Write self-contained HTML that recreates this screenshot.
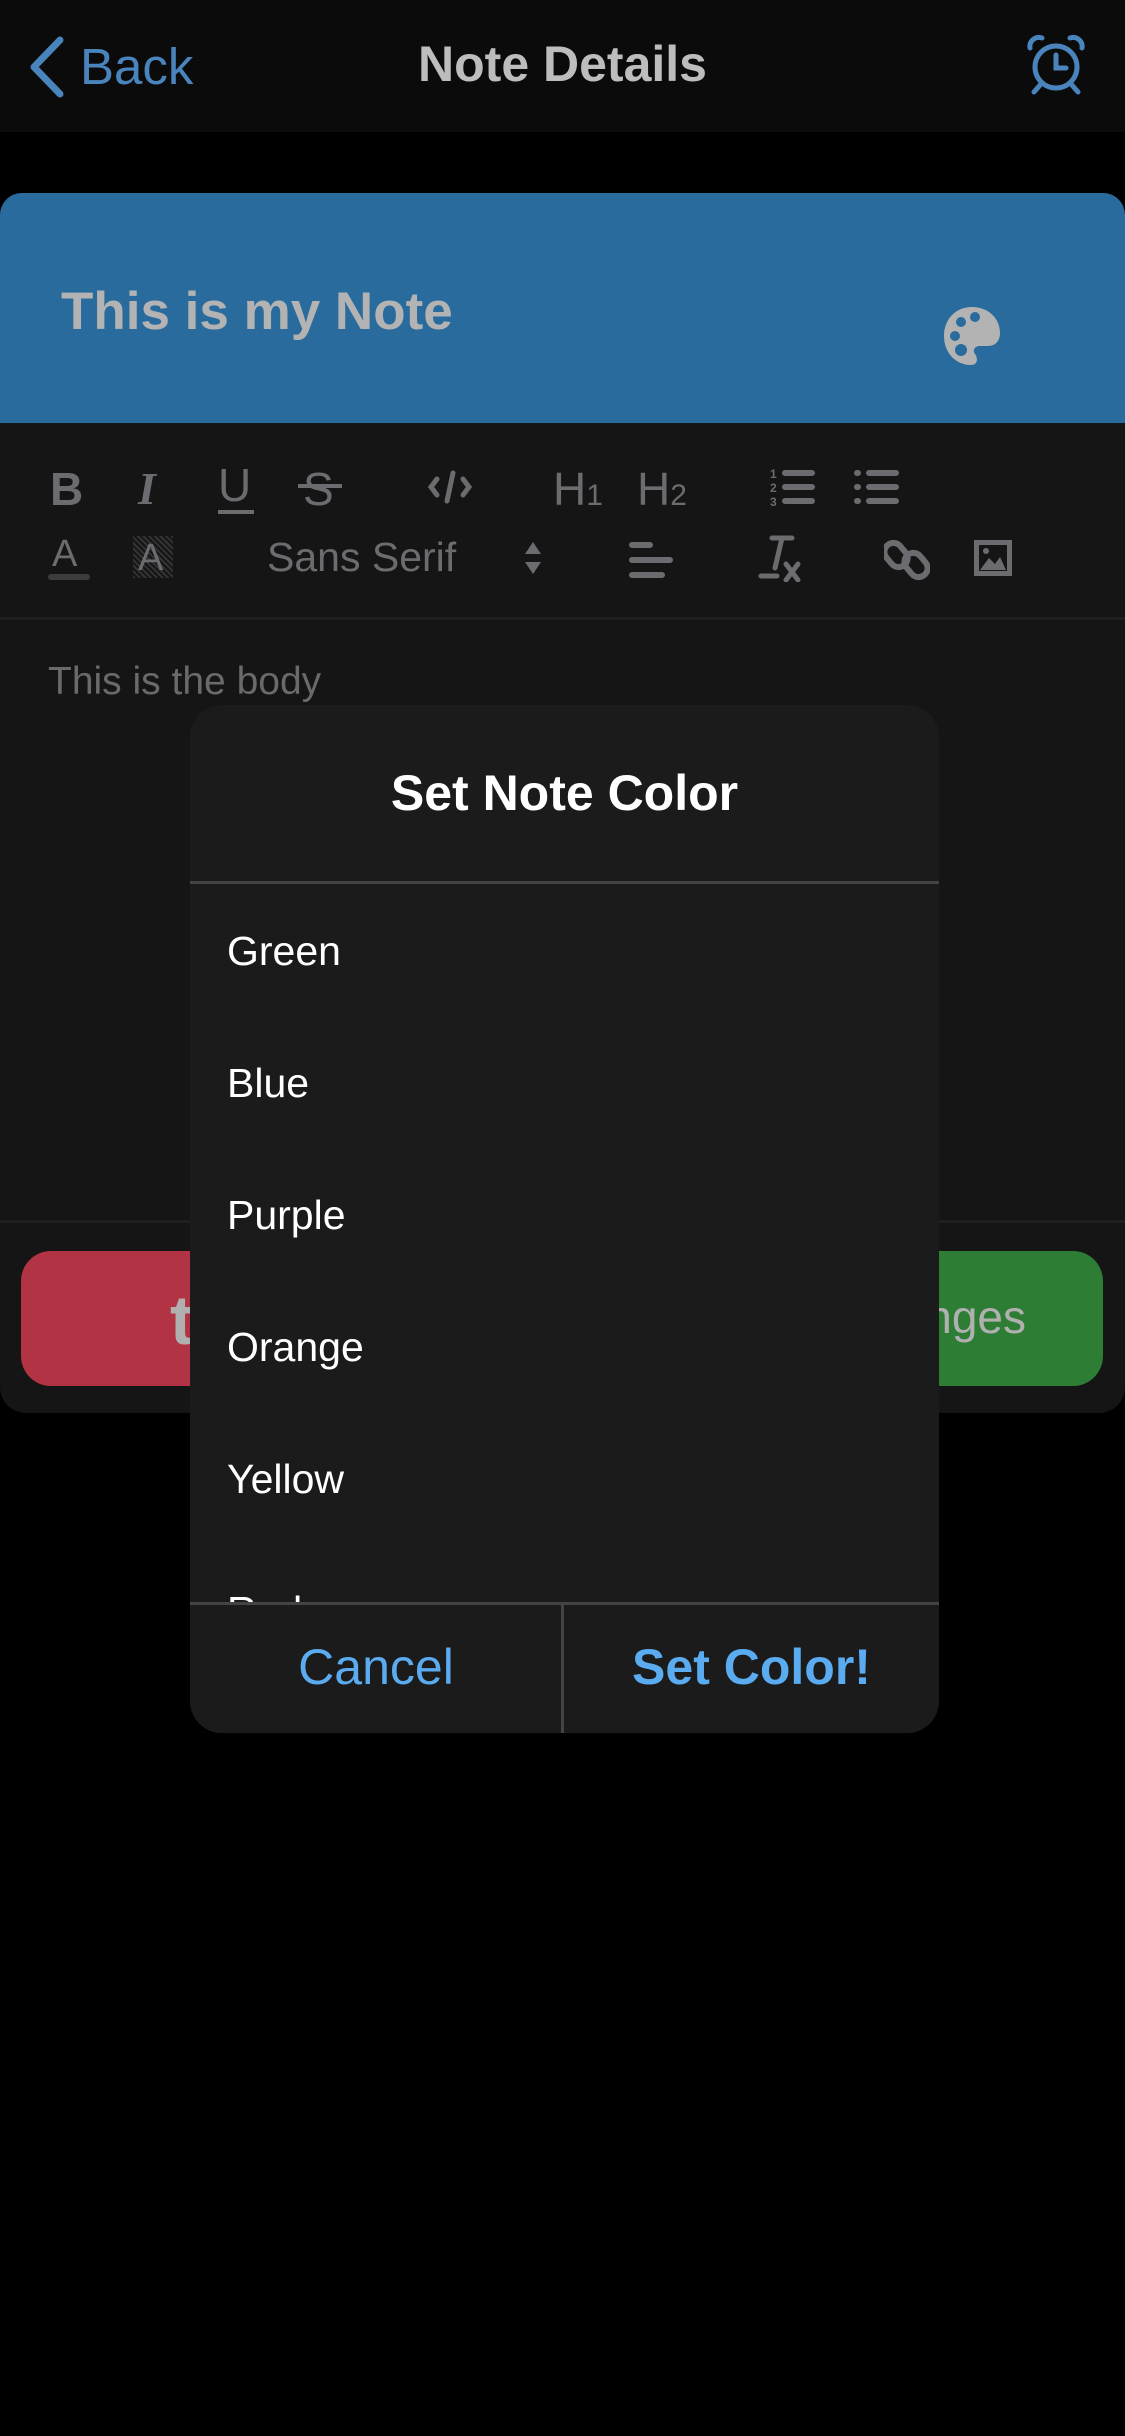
<!DOCTYPE html>
<html><head><meta charset="utf-8"><style>
*{margin:0;padding:0;box-sizing:border-box}
body{width:1125px;height:2436px;background:#000;font-family:"Liberation Sans",sans-serif;position:relative;overflow:hidden}
.a{position:absolute}
.hdr{left:0;top:0;width:1125px;height:132px;background:#0b0b0b}
.card{left:0;top:193px;width:1125px;height:1220px;background:#151515;border-radius:22px 22px 26px 26px;overflow:hidden}
.blue{left:0;top:193px;width:1125px;height:230px;background:#2a6b9e;border-radius:22px 22px 0 0}
.ico{fill:none;stroke:#6c6c70;stroke-width:5;stroke-linecap:round}
.tb{color:#6c6c70;font-weight:bold}
</style></head><body>
<div class="a hdr"></div>
<svg class="a" style="left:26px;top:36px" width="40" height="62" viewBox="0 0 40 62"><path d="M34 4 L8 31 L34 58" fill="none" stroke="#4a84bd" stroke-width="7" stroke-linecap="round" stroke-linejoin="round"/></svg>
<div class="a" style="left:80px;top:37px;font-size:51px;color:#4a84bd">Back</div>
<div class="a" style="left:0;width:1125px;text-align:center;top:35px;font-size:50px;font-weight:bold;color:#bdbdbd">Note Details</div>
<svg class="a" style="left:1024px;top:34px" width="64" height="62" viewBox="0 0 64 62"><g fill="none" stroke="#4a84bd" stroke-width="5" stroke-linecap="round"><circle cx="32" cy="33" r="21"/><path d="M32 21 V34 H42"/><path d="M6 14 A9 9 0 0 1 18 4"/><path d="M58 14 A9 9 0 0 0 46 4"/><path d="M17 50 L10 58 M47 50 L54 58"/></g></svg>

<div class="a card"></div>
<div class="a blue"></div>
<div class="a" style="left:61px;top:281px;font-size:53px;font-weight:bold;color:#b3b3b3">This is my Note</div>
<svg class="a" style="left:942px;top:305px" width="60" height="62" viewBox="0 0 60 62"><path d="M30 2 C13 2 2 15 2 31 C2 48 14 60 29 60 C36 60 36 53 33 49 C30 45 33 41 38 41 L46 41 C54 41 58 35 58 28 C58 13 46 2 30 2 Z" fill="#b3b3b3"/><circle cx="13" cy="31" r="5" fill="#2a6b9e"/><circle cx="19" cy="17" r="5" fill="#2a6b9e"/><circle cx="33" cy="12" r="5" fill="#2a6b9e"/><circle cx="19" cy="45" r="6" fill="#2a6b9e"/></svg>

<!-- toolbar row 1 -->
<div class="a tb" style="left:50px;top:462px;font-size:46px">B</div>
<div class="a tb" style="left:138px;top:462px;font-size:46px;font-style:italic;font-family:'Liberation Serif',serif">I</div>
<div class="a tb" style="left:218px;top:458px;font-size:46px;font-weight:normal">U</div>
<div class="a" style="left:218px;top:510px;width:36px;height:4px;background:#6c6c70"></div>
<div class="a tb" style="left:303px;top:462px;font-size:46px;font-weight:normal">S</div>
<div class="a" style="left:298px;top:484px;width:44px;height:4px;background:#6c6c70"></div>
<svg class="a" style="left:428px;top:470px" width="44" height="34" viewBox="0 0 44 34"><path class="ico" d="M9 9 L3 17 L9 25 M35 9 L41 17 L35 25 M25 3 L19 31"/></svg>
<div class="a tb" style="left:553px;top:462px;font-size:46px;font-weight:normal">H<span style="font-size:30px">1</span></div>
<div class="a tb" style="left:637px;top:462px;font-size:46px;font-weight:normal">H<span style="font-size:30px">2</span></div>
<svg class="a" style="left:770px;top:466px" width="46" height="40" viewBox="0 0 46 40"><text x="0" y="12" font-size="12" fill="#6c6c70" font-family="Liberation Sans" font-weight="bold">1</text><text x="0" y="26" font-size="12" fill="#6c6c70" font-family="Liberation Sans" font-weight="bold">2</text><text x="0" y="40" font-size="12" fill="#6c6c70" font-family="Liberation Sans" font-weight="bold">3</text><path d="M15 7 H42 M15 21 H42 M15 35 H42" stroke="#6c6c70" stroke-width="6" stroke-linecap="round"/></svg>
<svg class="a" style="left:854px;top:466px" width="46" height="40" viewBox="0 0 46 40"><path d="M3 7 H4 M3 21 H4 M3 35 H4 M15 7 H42 M15 21 H42 M15 35 H42" stroke="#6c6c70" stroke-width="6" stroke-linecap="round"/></svg>

<!-- toolbar row 2 -->
<div class="a tb" style="left:52px;top:533px;font-size:38px;font-weight:normal">A</div>
<div class="a" style="left:48px;top:574px;width:42px;height:6px;background:#3c3c3e;border-radius:3px"></div>
<div class="a" style="left:133px;top:536px;width:40px;height:42px;background:repeating-linear-gradient(45deg,#333 0 2px,#151515 2px 4px)"></div>
<div class="a tb" style="left:138px;top:537px;font-size:38px;font-weight:normal">A</div>
<div class="a" style="left:267px;top:534px;font-size:41px;color:#6c6c70">Sans Serif</div>
<svg class="a" style="left:523px;top:540px" width="20" height="36" viewBox="0 0 20 36"><path d="M10 2 L18 14 H2 Z M10 34 L18 22 H2 Z" fill="#6c6c70"/></svg>
<svg class="a" style="left:628px;top:540px" width="46" height="40" viewBox="0 0 46 40"><path d="M4 5 H22 M4 20 H42 M4 35 H34" stroke="#6c6c70" stroke-width="6" stroke-linecap="round"/></svg>
<svg class="a" style="left:758px;top:534px" width="46" height="48" viewBox="0 0 46 48"><path d="M14 4 H34 M24 4 L17 34 M3 42 H19" stroke="#6c6c70" stroke-width="5" stroke-linecap="round"/><path d="M28 30 L40 46 M40 30 L28 46" stroke="#6c6c70" stroke-width="5" stroke-linecap="round"/></svg>
<svg class="a" style="left:884px;top:536px" width="46" height="46" viewBox="0 0 46 46"><g fill="none" stroke="#6c6c70" stroke-width="6"><rect x="3" y="6" width="18" height="26" rx="9" transform="rotate(-40 12 19)"/><rect x="23" y="16" width="18" height="26" rx="9" transform="rotate(-40 32 29)"/></g></svg>
<svg class="a" style="left:972px;top:538px" width="42" height="40" viewBox="0 0 42 40"><rect x="2" y="2" width="38" height="36" fill="#6c6c70"/><rect x="7" y="7" width="28" height="26" fill="#151515"/><path d="M8 32 L17 20 L23 26 L28 19 L34 32 Z" fill="#6c6c70"/><circle cx="14" cy="13" r="3" fill="#6c6c70"/></svg>

<div class="a" style="left:0;top:617px;width:1125px;height:3px;background:#1f1f1f"></div>
<div class="a" style="left:48px;top:660px;font-size:39px;color:#6a6a6a">This is the body</div>
<div class="a" style="left:0;top:1220px;width:1125px;height:3px;background:#1f1f1f"></div>
<div class="a" style="left:21px;top:1251px;width:300px;height:135px;background:#b23444;border-radius:30px"></div>
<div class="a" style="left:170px;top:1280px;font-size:70px;font-weight:bold;color:#b0b0b0">t</div>
<div class="a" style="left:800px;top:1251px;width:303px;height:135px;background:#2e7d34;border-radius:30px"></div>
<div class="a" style="left:600px;top:1290px;width:426px;text-align:right;font-size:46px;color:#b0b0b0;white-space:nowrap">Save Changes</div>

<!-- modal -->
<div class="a" style="left:190px;top:705px;width:749px;height:1028px;background:#1b1b1b;border-radius:32px;overflow:hidden">
  <div class="a" style="left:0;width:749px;top:59px;text-align:center;font-size:50px;font-weight:bold;color:#fff">Set Note Color</div>
  <div class="a" style="left:0;top:176px;width:749px;height:3px;background:#444"></div>
  <div class="a" style="left:37px;top:223px;font-size:41px;color:#fff">Green</div>
  <div class="a" style="left:37px;top:355px;font-size:41px;color:#fff">Blue</div>
  <div class="a" style="left:37px;top:487px;font-size:41px;color:#fff">Purple</div>
  <div class="a" style="left:37px;top:619px;font-size:41px;color:#fff">Orange</div>
  <div class="a" style="left:37px;top:751px;font-size:41px;color:#fff">Yellow</div>
  <div class="a" style="left:37px;top:883px;font-size:41px;color:#fff">Red</div>
  <div class="a" style="left:0;top:897px;width:749px;height:131px;background:#1b1b1b"></div>
  <div class="a" style="left:0;top:897px;width:749px;height:3px;background:#444"></div>
  <div class="a" style="left:371px;top:899px;width:3px;height:129px;background:#444"></div>
  <div class="a" style="left:0;width:372px;top:933px;text-align:center;font-size:50px;color:#5aabf0">Cancel</div>
  <div class="a" style="left:374px;width:375px;top:933px;text-align:center;font-size:50px;font-weight:bold;color:#5aabf0">Set Color!</div>
</div>
</body></html>
